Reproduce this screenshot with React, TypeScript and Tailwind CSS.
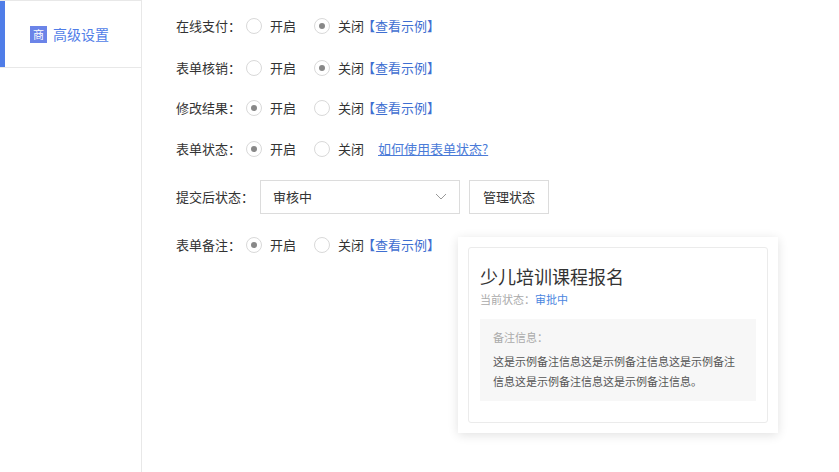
const font = { fontFamily: '"Noto Sans CJK SC", "Noto Sans", sans-serif' };

function Radio({ on }: { on: boolean }) {
  return (
    <span className="w-[16px] h-[16px] rounded-full border border-[#d9d9d9] bg-white flex items-center justify-center">
      {on && <span className="w-[6px] h-[6px] rounded-full bg-[#888]" />}
    </span>
  );
}

function Row({ label, on, guide }: { label: string; on: boolean; guide?: boolean }) {
  return (
    <div className="flex items-center h-[20px] text-[13px] text-[#333]">
      <span className="w-[70px]">{label}</span>
      <span className="flex items-center gap-[8px] w-[68px]">
        <Radio on={on} />
        开启
      </span>
      <span className="flex items-center gap-[8px] w-[62px]">
        <Radio on={!on} />
        关闭
      </span>
      {guide ? (
        <a className="ml-[-27px] pl-[29px] text-[#4a7bd8] underline">如何使用表单状态?</a>
      ) : (
        <span className="text-[#3f6fd1] ml-[-14px]">【查看示例】</span>
      )}
    </div>
  );
}

export default function App() {
  return (
    <div className="w-[839px] h-[472px] bg-white flex relative overflow-hidden" style={font}>
      <div className="w-[142px] border-r border-[#e8e8e8] shrink-0">
        <div className="h-[68px] border-y border-[#e8e8e8] flex items-center">
          <div className="w-[5px] h-full bg-[#4f7de8]" />
          <div className="flex items-center gap-[6px] ml-[25px] text-[14px] text-[#4f7de8]">
            <span className="w-[17px] h-[17px] bg-[#6b84e8] text-white text-[11px] flex items-center justify-center">商</span>
            高级设置
          </div>
        </div>
      </div>
      <div className="pl-[34px] pt-[16px] flex flex-col">
        <Row label="在线支付：" on={false} />
        <div className="h-[22px]" />
        <Row label="表单核销：" on={false} />
        <div className="h-[20px]" />
        <Row label="修改结果：" on={true} />
        <div className="h-[21px]" />
        <Row label="表单状态：" on={true} guide />
        <div className="flex items-center mt-[21px] text-[13px] text-[#333]">
          <span className="w-[84px]">提交后状态：</span>
          <div className="w-[200px] h-[34px] border border-[#dcdcdc] flex items-center justify-between px-[12px]">
            <span>审核中</span>
            <svg width="12" height="8" viewBox="0 0 12 8"><path d="M1 1l5 5 5-5" fill="none" stroke="#999" strokeWidth="1" /></svg>
          </div>
          <button className="ml-[9px] w-[80px] h-[34px] border border-[#dcdcdc] text-[13px]">管理状态</button>
        </div>
        <div className="h-[21px]" />
        <Row label="表单备注：" on={true} />
      </div>
      <div className="absolute left-[458px] top-[237px] w-[320px] h-[196px] bg-white shadow-[0_2px_10px_rgba(0,0,0,0.12)] p-[10px]">
        <div className="w-full h-full border border-[#ebebeb] rounded-[3px] px-[11px] pt-[16px]">
          <div className="text-[18px] text-[#333] leading-[24px]">少儿培训课程报名</div>
          <div className="text-[11px] mt-[3px]">
            <span className="text-[#aaa]">当前状态：</span>
            <span className="text-[#4a85e0]">审批中</span>
          </div>
          <div className="mt-[11px] bg-[#f7f7f7] px-[13px] pt-[10px] pb-[10px] text-[11px]">
            <div className="text-[#aaa]">备注信息：</div>
            <div className="text-[#555] leading-[20px] mt-[6px]">这是示例备注信息这是示例备注信息这是示例备注信息这是示例备注信息这是示例备注信息。</div>
          </div>
        </div>
      </div>
    </div>
  );
}
